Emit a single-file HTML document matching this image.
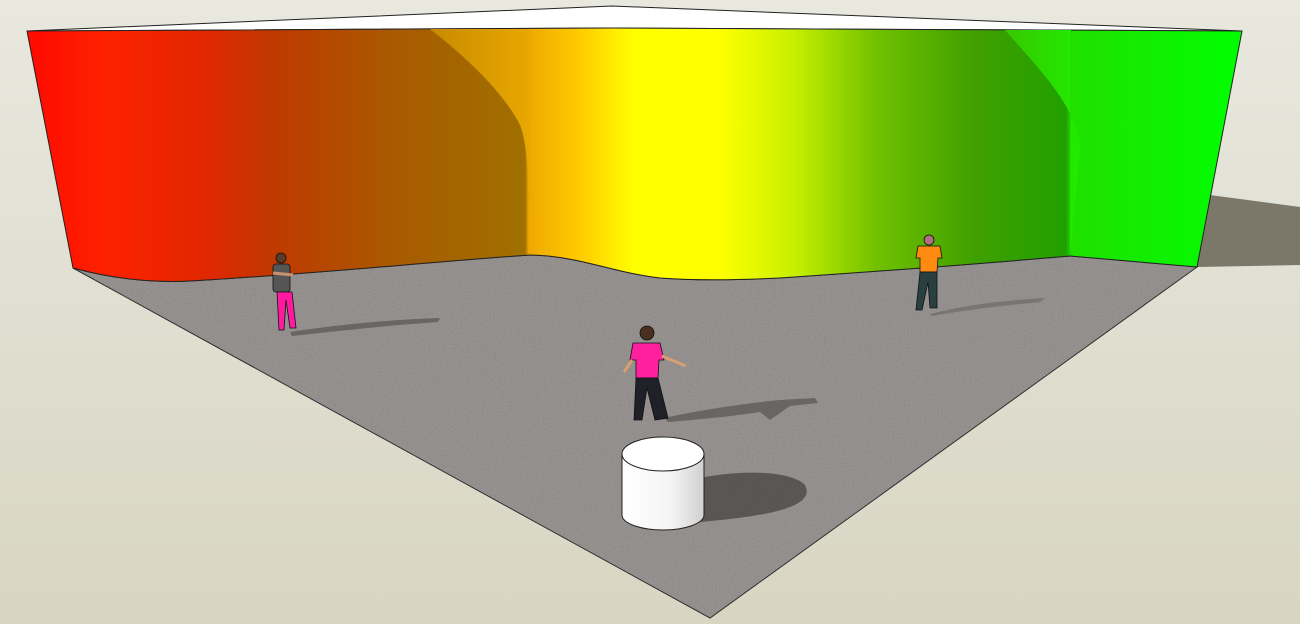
<!DOCTYPE html>
<html><head><meta charset="utf-8"><style>
html,body{margin:0;padding:0;width:1300px;height:624px;overflow:hidden}
svg{display:block}
</style></head><body>
<svg width="1300" height="624" viewBox="0 0 1300 624" xmlns="http://www.w3.org/2000/svg">
<defs>
<linearGradient id="bg" x1="0" y1="0" x2="0" y2="1">
<stop offset="0" stop-color="#e8e8df"/><stop offset="1" stop-color="#d8d5c2"/>
</linearGradient>
<linearGradient id="wall" x1="27" y1="0" x2="1242" y2="0" gradientUnits="userSpaceOnUse">
<stop offset="0" stop-color="#ff0a00"/>
<stop offset="0.06" stop-color="#ff2000"/>
<stop offset="0.15" stop-color="#e02800"/>
<stop offset="0.2" stop-color="#c03800"/>
<stop offset="0.3" stop-color="#a85a00"/>
<stop offset="0.41" stop-color="#a07000"/>
<stop offset="0.413" stop-color="#f0a800"/>
<stop offset="0.46" stop-color="#ffd000"/>
<stop offset="0.5" stop-color="#ffff00"/>
<stop offset="0.57" stop-color="#ffff00"/>
<stop offset="0.63" stop-color="#c8f000"/>
<stop offset="0.7" stop-color="#70c000"/>
<stop offset="0.78" stop-color="#40a000"/>
<stop offset="0.855" stop-color="#20a000"/>
<stop offset="0.86" stop-color="#20e000"/>
<stop offset="1" stop-color="#00ff00"/>
</linearGradient>
<linearGradient id="org" x1="430" y1="0" x2="530" y2="0" gradientUnits="userSpaceOnUse">
<stop offset="0" stop-color="#c88a00"/><stop offset="1" stop-color="#e8a800"/>
</linearGradient>
<linearGradient id="grn" x1="1005" y1="0" x2="1080" y2="0" gradientUnits="userSpaceOnUse">
<stop offset="0" stop-color="#38c800"/><stop offset="1" stop-color="#20ec00"/>
</linearGradient>
<linearGradient id="cyl" x1="622" y1="0" x2="705" y2="0" gradientUnits="userSpaceOnUse">
<stop offset="0" stop-color="#ffffff"/><stop offset="0.6" stop-color="#f4f4f4"/><stop offset="1" stop-color="#cfcfcf"/>
</linearGradient>
<filter id="noise"><feTurbulence type="fractalNoise" baseFrequency="0.9" numOctaves="2" seed="3"/><feColorMatrix type="saturate" values="0"/><feComponentTransfer><feFuncA type="linear" slope="0.35"/></feComponentTransfer><feComposite in2="SourceGraphic" operator="in"/></filter>
</defs>
<rect width="1300" height="624" fill="url(#bg)"/>
<polygon points="1210,195 1300,207 1300,265 1197,267" fill="#7b786a"/>
<path d="M73,268 C110,278 150,283 190,281 C300,275 430,262 530,255 C580,256 610,272 660,278 C700,281 740,280 780,278 C900,270 1000,262 1070,256 L1197,267 L710,618 Z" fill="#8a8684" stroke="#222" stroke-width="1"/>
<path d="M73,268 C110,278 150,283 190,281 C300,275 430,262 530,255 C580,256 610,272 660,278 C700,281 740,280 780,278 C900,270 1000,262 1070,256 L1197,267 L710,618 Z" fill="#fff" filter="url(#noise)"/>
<polygon points="27,31 612,6 1242,31 612,28" fill="#ffffff" stroke="#222" stroke-width="1"/>
<path d="M27,31 L612,28 L1242,31 L1197,267 L1070,256 C1000,262 900,270 780,278 C740,280 700,281 660,278 C610,272 580,256 530,255 C430,262 300,275 190,281 C150,283 110,278 73,268 Z" fill="url(#wall)" stroke="#222" stroke-width="1"/>
<path d="M430,29 C470,60 505,95 520,125 C530,150 528,200 530,255 L531,29 Z" fill="url(#org)"/>
<path d="M1005,30 C1040,70 1080,110 1080,150 L1070,256 L1071,30 Z" fill="url(#grn)"/>
<path d="M290,332 C330,326 380,320 440,318 L438,322 C380,326 330,332 292,336 Z" fill="#5e5b59" opacity="0.8"/>
<path d="M930,314 C970,304 1010,300 1046,298 L1040,302 C1000,306 965,310 932,316 Z" fill="#6c6966" opacity="0.7"/>
<path d="M664,418 C700,410 740,404 780,400 L815,398 L818,403 L790,406 L770,420 L760,412 C720,418 690,420 668,422 Z" fill="#5e5b59" opacity="0.8"/>
<path d="M700,478 C740,470 790,470 805,485 C815,505 780,515 700,522 Z" fill="#4f4c4a" opacity="0.85"/>
<path d="M622,454 L622,515 A41,15 0 0 0 704,515 L704,454 Z" fill="url(#cyl)" stroke="#222" stroke-width="1"/>
<ellipse cx="663" cy="454" rx="41" ry="17" fill="#ffffff" stroke="#222" stroke-width="1"/>
<g stroke="#111" stroke-width="0.8">
<circle cx="281" cy="258" r="5" fill="#5a3a2a"/>
<rect x="273" y="264" width="17" height="28" rx="3" fill="#555"/>
<path d="M273,273 L293,275" stroke="#c89070" stroke-width="3"/>
<path d="M277,292 L279,330 L284,330 L286,300 L290,328 L296,328 L292,292 Z" fill="#ff1aa0"/>
</g>
<g stroke="#111" stroke-width="0.8">
<circle cx="647" cy="333" r="7" fill="#4a3020"/>
<path d="M633,343 L660,343 L664,360 L659,360 L658,378 L636,378 L636,360 L630,360 Z" fill="#ff20a0"/>
<path d="M632,360 L624,372" stroke="#d8a070" stroke-width="3"/>
<path d="M662,356 L686,366" stroke="#d8a070" stroke-width="3"/>
<path d="M636,378 L634,420 L642,420 L647,388 L655,420 L668,418 L658,378 Z" fill="#202028"/>
</g>
<g stroke="#111" stroke-width="0.8">
<circle cx="929" cy="240" r="5" fill="#b07080"/>
<path d="M918,246 L940,246 L942,258 L938,258 L937,272 L920,272 L920,258 L916,258 Z" fill="#ff8a10"/>
<path d="M920,272 L916,310 L922,310 L928,282 L930,308 L937,308 L937,272 Z" fill="#2a4040"/>
</g>
</svg>
</body></html>
